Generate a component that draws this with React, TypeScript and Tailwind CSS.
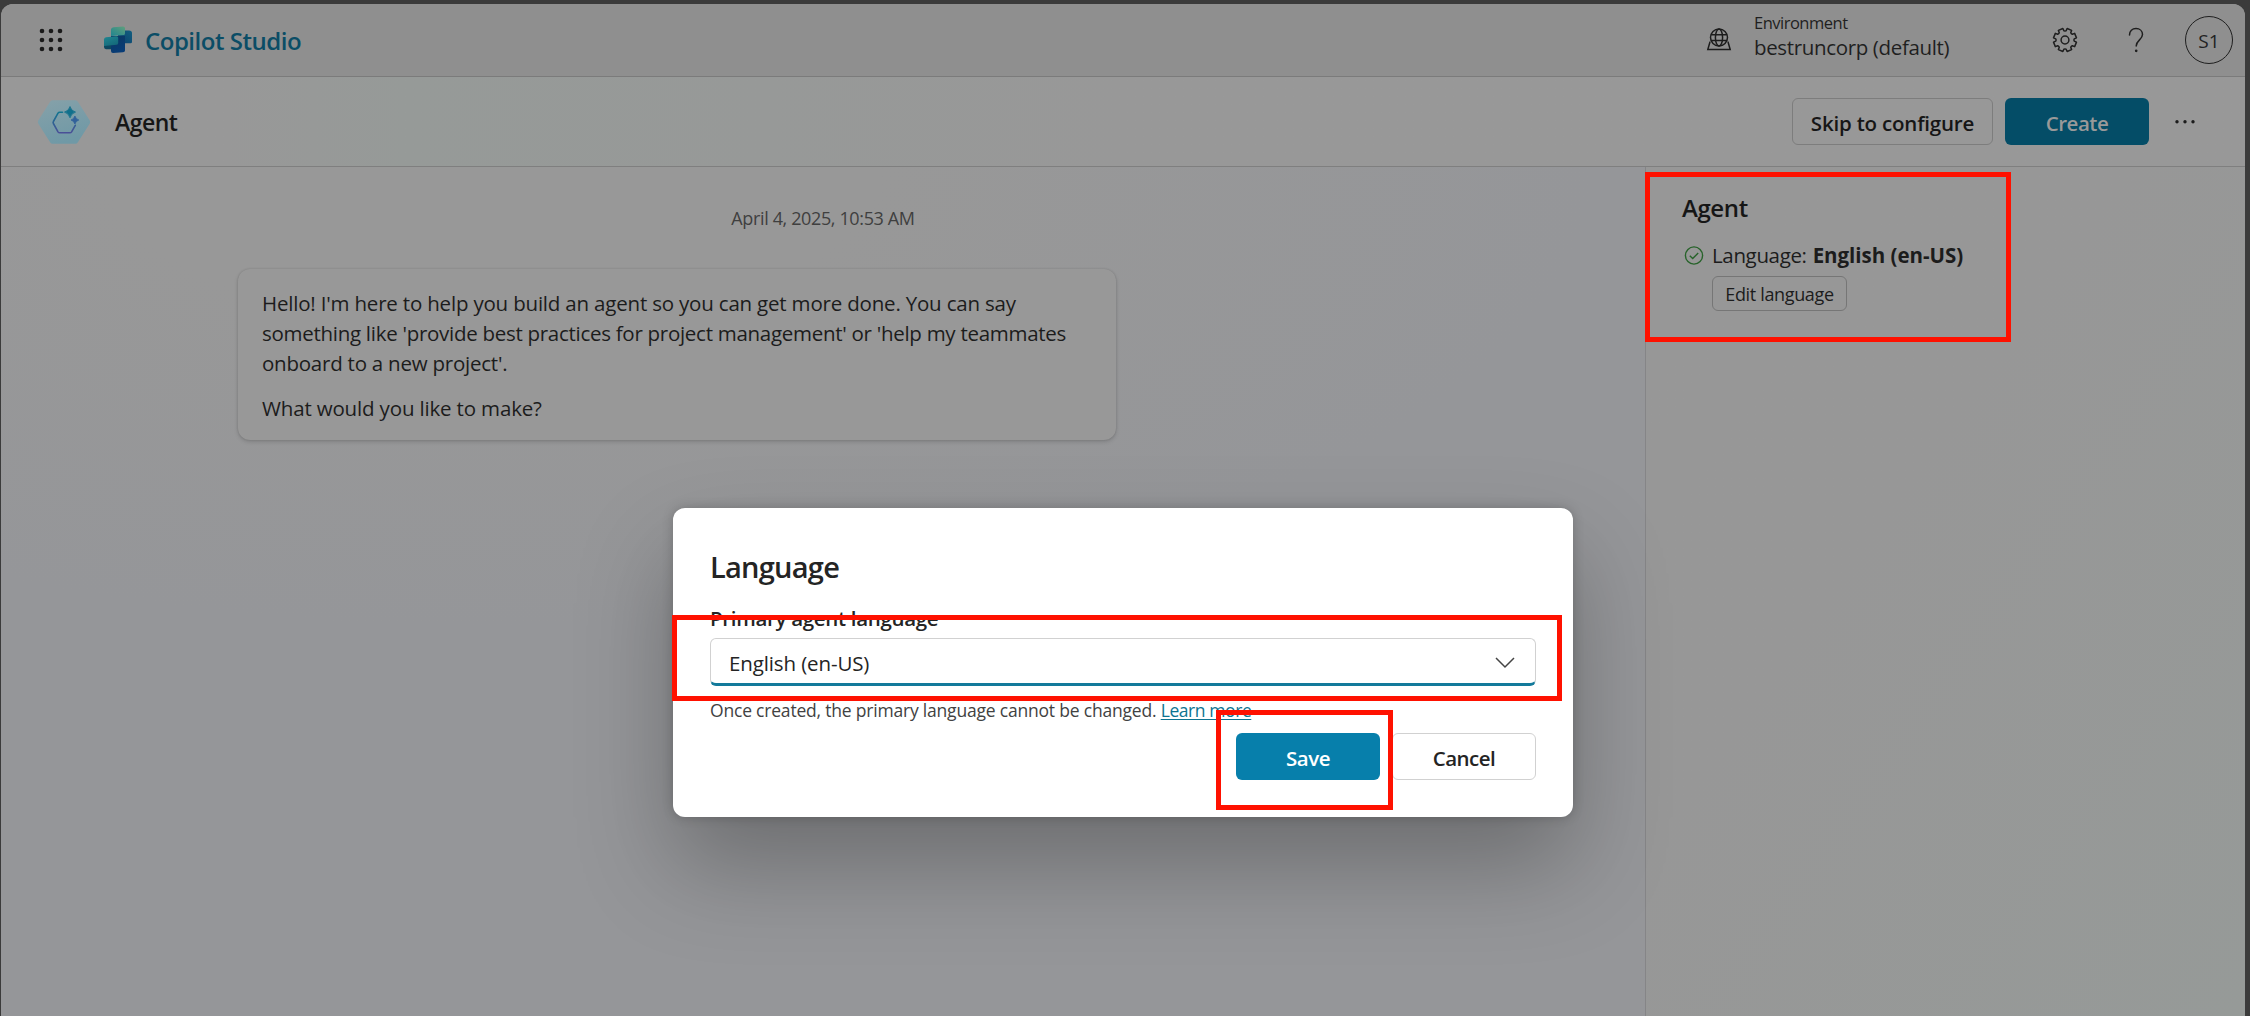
import type { ReactNode } from "react";

function Waffle() {
  const steps = [3, 12, 21];
  return (
    <svg width="24" height="24" viewBox="0 0 24 24" fill="#1a1a1a">
      {steps.map((y) => steps.map((x) => <circle key={`${x}-${y}`} cx={x} cy={y} r="2.3" />))}
    </svg>
  );
}

function CopilotLogo() {
  return (
    <svg width="30" height="28" viewBox="0 0 30 28">
      <defs>
        <linearGradient id="lgTop" x1="0" y1="1" x2="1" y2="0">
          <stop offset="0" stopColor="#1f8590" />
          <stop offset="1" stopColor="#5f9f7c" />
        </linearGradient>
        <linearGradient id="lgLeft" x1="0" y1="0" x2="0.6" y2="1">
          <stop offset="0" stopColor="#218791" />
          <stop offset="1" stopColor="#14697a" />
        </linearGradient>
        <linearGradient id="lgRight" x1="1" y1="0" x2="0" y2="1">
          <stop offset="0" stopColor="#125f80" />
          <stop offset="1" stopColor="#0c3f6c" />
        </linearGradient>
        <linearGradient id="lgBottom" x1="0" y1="0" x2="0.4" y2="1">
          <stop offset="0" stopColor="#0c3861" />
          <stop offset="1" stopColor="#083c76" />
        </linearGradient>
      </defs>
      <path d="M1 18h13v5.300H3Q1 22.800 1 21z" fill="#0d4860" />
      <path d="M15 4.500h11q3 .2 3 2.500V16q0 1.300-1.500 1.300H15z" fill="url(#lgRight)" />
      <path d="M8 10h14v14.500q0 1.700-2 1.800L10 27q-2 0-2-2z" fill="url(#lgBottom)" />
      <path d="M3 11.200 13.500 10.300q1.700 0 1.700 1.500V17q0 1.500-1.500 1.700L1 20v-6.500Q1 11.600 3 11.200z" fill="url(#lgLeft)" />
      <path d="M10.500 1.200 20 .5q2 0 2 1.500v5.500Q22 9 20.500 9L8 10V3.500q0-2 2.500-2.300z" fill="url(#lgTop)" />
    </svg>
  );
}

function AgentHexagon() {
  return (
    <svg width="56" height="46" viewBox="0 0 56 46">
      <defs>
        <linearGradient id="hexFill" x1="0" y1="0" x2="0.4" y2="1">
          <stop offset="0" stopColor="#86a1a9" />
          <stop offset="1" stopColor="#7099a6" />
        </linearGradient>
        <linearGradient id="hexLine" x1="0" y1="0" x2="0" y2="1">
          <stop offset="0" stopColor="#11758f" />
          <stop offset="1" stopColor="#4a4f97" />
        </linearGradient>
      </defs>
      <path
        d="M16.500 1.200h23q1.500 0 2.400 1.500l11.900 18.800q.8 1.500 0 3l-11.900 18.800q-.9 1.500-2.400 1.500h-23q-1.500 0-2.400-1.500l-11.900-18.800q-.8-1.500 0-3l11.900-18.800Q15 1.200 16.500 1.200z"
        fill="url(#hexFill)"
      />
      <path
        d="M26.500 13.200h-2.700q-1.200 0-1.800 1l-4.600 8.300q-.6 1 0 2l4.600 8.300q.6 1 1.800 1h10q1.200 0 1.800-1l3.700-6.500"
        fill="none"
        stroke="url(#hexLine)"
        strokeWidth="1.600"
        strokeLinecap="round"
      />
      <path d="M34 7.500q1.100 4.300 5.500 5.600-4.400 1.300-5.500 5.700-1.100-4.400-5.500-5.700 4.400-1.300 5.500-5.600z" fill="#11708c" stroke="#11708c" strokeWidth=".8" />
      <path d="M38.900 17q.8 3 3.900 4-3.100 1-3.900 4-.8-3-3.900-4 3.100-1 3.900-4z" fill="#31619a" stroke="#31619a" strokeWidth=".8" />
    </svg>
  );
}

function GlobeTray() {
  return (
    <svg width="26" height="24" viewBox="0 0 26 24" fill="none" stroke="#1c1c1c" strokeWidth="1.500">
      <circle cx="13" cy="9.500" r="8.500" />
      <ellipse cx="13" cy="9.500" rx="3.600" ry="8.500" />
      <path d="M5 6.700h16M5 12.500h16" />
      <path d="M4.500 14.300H3.900L1.800 21.600h22.400l-2.100-7.300h-.6" />
    </svg>
  );
}

function Gear() {
  const points: string[] = [];
  for (let tooth = 0; tooth < 8; tooth++) {
    const shape: [number, number][] = [
      [-22.5, 8.9],
      [-15.5, 9.3],
      [-12, 11.7],
      [12, 11.7],
      [15.5, 9.3],
    ];
    for (const [offset, radius] of shape) {
      const angle = ((tooth * 45 + 22.5 + offset) * Math.PI) / 180;
      points.push(`${(13 + radius * Math.cos(angle)).toFixed(2)},${(13 + radius * Math.sin(angle)).toFixed(2)}`);
    }
  }
  return (
    <svg width="26" height="26" viewBox="0 0 26 26" fill="none" stroke="#1f1f1f" strokeWidth="1.500" strokeLinejoin="round">
      <polygon points={points.join(" ")} />
      <circle cx="13" cy="13" r="3.900" />
    </svg>
  );
}

function QuestionMark() {
  return (
    <svg width="16" height="26" viewBox="0 0 16 26" fill="none" stroke="#1f1f1f" strokeWidth="1.500" strokeLinecap="round">
      <path d="M1.500 8C1.500 4 4.300 1.600 8 1.600S14.500 4 14.500 7.600c0 5-6.300 5.600-6.300 11.400" />
      <circle cx="8.200" cy="23.800" r=".6" fill="#1f1f1f" />
    </svg>
  );
}

function Highlight({ className }: { className: string }) {
  return <div className={`pointer-events-none absolute border-[5px] border-[#ff1100] ${className}`} />;
}

function Line({ className, children }: { className: string; children: ReactNode }) {
  return <span className={`block whitespace-nowrap ${className}`}>{children}</span>;
}

function TopBar() {
  return (
    <header className="flex h-[73px] shrink-0 items-center border-b border-[#7b7b7b] bg-[#8f8f8f] pl-[38px] pr-3">
      <Waffle />
      <div className="ml-[40px]">
        <CopilotLogo />
      </div>
      <span className="ml-[12px] pt-[2px] text-[24px] leading-8 font-semibold tracking-[-0.48px] text-[#0b4d66]">Copilot Studio</span>
      <div className="ml-auto flex items-center">
        <GlobeTray />
        <div className="mb-[6px] ml-[22px] w-[298px] text-[#1f1f1f]">
          <Line className="text-[16.5px] leading-5 tracking-[-0.5px]">Environment</Line>
          <Line className="text-[20.5px] leading-7 tracking-[-0.35px]">bestruncorp (default)</Line>
        </div>
        <Gear />
        <div className="ml-[50px]">
          <QuestionMark />
        </div>
        <div className="ml-[41px] flex size-12 items-center justify-center rounded-full border border-[#1f1f1f] pt-[2px] text-[19px] text-[#222]">S1</div>
      </div>
    </header>
  );
}

function AgentBar() {
  return (
    <div className="flex h-[90px] shrink-0 items-center border-b border-[#7f7f7f] bg-linear-to-r from-[#989898] from-10% via-[#969a98] via-18% to-[#989898] to-50% pl-[35px] pr-[50px]">
      <AgentHexagon />
      <span className="ml-[23px] pt-[2px] text-[23px] font-semibold tracking-[-0.5px] text-[#161616]">Agent</span>
      <button className="ml-auto h-[47px] w-[201px] rounded-md border border-[#7d7d7d] pt-[3px] text-[20.5px] font-semibold tracking-[-0.2px] text-[#161616]">
        Skip to configure
      </button>
      <button className="ml-[12px] h-[47px] w-[144px] rounded-md bg-[#044d67] pt-[3px] text-[20.5px] font-semibold tracking-[-0.5px] text-[#999]">Create</button>
      <svg className="ml-[26px]" width="20" height="5" viewBox="0 0 20 5" fill="#1c1c1c">
        <circle cx="2" cy="2.800" r="1.700" />
        <circle cx="10" cy="2.800" r="1.700" />
        <circle cx="18" cy="2.800" r="1.700" />
      </svg>
    </div>
  );
}

function Chat() {
  return (
    <main className="w-[1644px] shrink-0 bg-[radial-gradient(ellipse_1100px_460px_at_30%_0%,#989898_35%,#959699_100%)] pt-[39px]">
      <p className="text-center text-[18px] leading-6 tracking-[-0.37px] text-[#3f3f3f]">April 4, 2025, 10:53 AM</p>
      <div className="mt-[39px] ml-[237px] h-[171px] w-[878px] rounded-xl bg-[#989898] pt-[19px] pl-6 text-[20.5px] leading-[30px] text-[#1c1c1c] shadow-[0_0_2px_rgba(0,0,0,0.16),0_2px_4px_rgba(0,0,0,0.14)]">
        <p>
          <Line className="tracking-[-0.19px]">Hello! I'm here to help you build an agent so you can get more done. You can say</Line>
          <Line className="tracking-[-0.28px]">something like 'provide best practices for project management' or 'help my teammates</Line>
          <Line className="tracking-[-0.23px]">onboard to a new project'.</Line>
        </p>
        <p className="mt-[15px] tracking-[-0.16px]">What would you like to make?</p>
      </div>
    </main>
  );
}

function Sidebar() {
  return (
    <aside className="grow border-l border-[#858587] bg-linear-to-br from-[#979797] from-40% to-[#969a98] pt-[26px] pl-[36px]">
      <h2 className="text-[24px] leading-[30px] font-semibold tracking-[-0.4px] text-[#161616]">Agent</h2>
      <div className="mt-[17px] flex items-center gap-[8px] pl-[2px] text-[#1c1c1c]">
        <svg width="20" height="20" viewBox="0 0 20 20" fill="none" stroke="#27632a" strokeWidth="1.400">
          <circle cx="10" cy="10.500" r="8.600" />
          <path d="M5.800 10.800l2.900 2.800 5.500-5.600" />
        </svg>
        <span className="text-[20.5px] leading-[30px] tracking-[-0.35px] whitespace-nowrap">
          Language: <b className="ml-px font-bold tracking-[-0.02px]">English (en-US)</b>
        </span>
      </div>
      <button className="mt-[6px] ml-[30px] h-[35px] w-[135px] rounded-md border border-[#767676] pt-[2px] text-[18px] tracking-[-0.35px] whitespace-nowrap text-[#1c1c1c]">
        Edit language
      </button>
    </aside>
  );
}

function LanguageDialog() {
  return (
    <div className="absolute top-[508px] left-[673px] h-[309px] w-[900px] rounded-xl bg-white px-[37px] pt-[39px] text-[#242424] shadow-[0_0_12px_rgba(0,0,0,0.2),0_48px_96px_rgba(0,0,0,0.27)]">
      <h1 className="text-[29px] leading-10 font-semibold tracking-[-0.75px]">Language</h1>
      <p className="mt-4 text-[20.5px] leading-[30px] font-semibold tracking-[-0.32px]">Primary agent language</p>
      <div className="mt-[5px] flex h-[48px] items-center justify-between overflow-hidden rounded-md border border-b-[3px] border-[#d1d1d1] border-b-[#137a9b] pr-[20px] pl-[18px]">
        <span className="pt-[4px] text-[20.5px] tracking-[-0.12px]">English (en-US)</span>
        <svg className="mt-[3px]" width="20" height="12" viewBox="0 0 20 12" fill="none" stroke="#444" strokeWidth="1.500">
          <path d="M1 1l9 9 9-9" />
        </svg>
      </div>
      <p className="mt-3 text-[17.5px] leading-6 tracking-[-0.2px] whitespace-nowrap text-[#424242]">
        Once created, the primary language cannot be changed. <a className="tracking-[-0.42px] text-[#0d7491] underline decoration-1 underline-offset-2">Learn more</a>
      </p>
      <div className="mt-[11px] flex justify-end gap-3 text-[20.5px] font-semibold">
        <button className="h-[47px] w-[144px] rounded-md bg-[#077fab] pt-[3px] tracking-[-0.45px] text-white">Save</button>
        <button className="h-[47px] w-[144px] rounded-md border border-[#d1d1d1] bg-white pt-[3px] tracking-[-0.5px]">Cancel</button>
      </div>
    </div>
  );
}

export default function App() {
  return (
    <div className="relative h-[1016px] w-[2250px] overflow-hidden bg-[#3b3b3b] pt-1 pr-[5px] pl-px font-['Open_Sans',sans-serif]">
      <div className="flex h-[1012px] flex-col overflow-hidden rounded-t-xl bg-[#979797]">
        <TopBar />
        <AgentBar />
        <div className="flex grow">
          <Chat />
          <Sidebar />
        </div>
      </div>
      <LanguageDialog />
      <Highlight className="top-[172px] left-[1645px] h-[170px] w-[366px]" />
      <Highlight className="top-[615px] left-[672px] h-[86px] w-[890px]" />
      <Highlight className="top-[710px] left-[1216px] h-[100px] w-[177px]" />
    </div>
  );
}
